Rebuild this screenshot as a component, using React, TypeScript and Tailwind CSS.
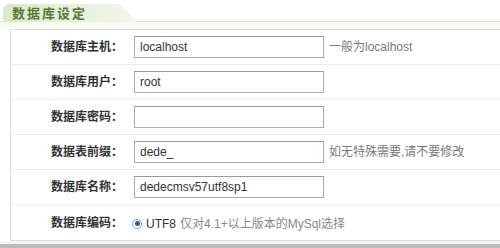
import React from 'react';

const rows: { label: string; value?: string; hint?: string; radio?: boolean }[] = [
  { label: '数据库主机：', value: 'localhost', hint: '一般为localhost' },
  { label: '数据库用户：', value: 'root' },
  { label: '数据库密码：', value: '' },
  { label: '数据表前缀：', value: 'dede_', hint: '如无特殊需要,请不要修改' },
  { label: '数据库名称：', value: 'dedecmsv57utf8sp1' },
  { label: '数据库编码：', radio: true },
];

const cjk = "font-['Liberation_Sans','Noto_Sans_CJK_SC',sans-serif]";

export default function App() {
  return (
    <div className={`w-[500px] h-[248px] overflow-hidden bg-white flex flex-col ${cjk}`}>
      {/* section tab */}
      <div className="h-[22px] pt-[4px] pl-[3px] border-b border-[#dbe8cc] flex">
        <div className="w-[134px] h-[18px] rounded-tl-[6px] bg-gradient-to-r from-[#dbe9cc] via-[#e6f0dc] to-[#f0f6e9] [clip-path:polygon(0_0,87%_0,100%_100%,0_100%)] pl-[9px] flex items-center">
          <span className="text-[13px] font-bold tracking-[2px] text-[#567a36] leading-none">数据库设定</span>
        </div>
      </div>
      <div className="h-[7px] bg-gradient-to-b from-[#f6faf2] to-[#fbfdf9]" />

      {/* form panel */}
      <div className="ml-[10px] h-[212px] border border-[#dedede] border-r-0 flex flex-col">
        {rows.map((r, i) => (
          <div
            key={r.label}
            className={`h-[35px] shrink-0 flex items-center ${i < rows.length - 1 ? 'border-b border-[#ececec]' : ''}`}
          >
            <div className="w-[114px] text-right text-[12px] font-bold text-[#333] pr-[2px]">{r.label}</div>
            {r.radio ? (
              <div className="ml-[7px] flex items-center text-[12px] mt-[2px]">
                <span className="w-[10px] h-[10px] rounded-full border border-[#8a9bb0] bg-white flex items-center justify-center">
                  <span className="w-[5px] h-[5px] rounded-full bg-[#2d5f9e]" />
                </span>
                <span className="ml-[4px] text-[#333]">UTF8</span>
                <span className="ml-[4px] text-[#888]">仅对4.1+以上版本的MySql选择</span>
              </div>
            ) : (
              <>
                <div className="ml-[9px] w-[190px] h-[22px] border border-[#a9a9a9] border-t-[#999] bg-white flex items-center pl-[5px] text-[12px] text-[#333]">
                  {r.value}
                </div>
                {r.hint && <span className="ml-[5px] text-[12px] text-[#7a7a7a]">{r.hint}</span>}
              </>
            )}
          </div>
        ))}
      </div>
      <div className="h-[3px] bg-[#f4f6f2]" />
      <div className="h-[4px] bg-[#bcbcbc]" />
    </div>
  );
}
